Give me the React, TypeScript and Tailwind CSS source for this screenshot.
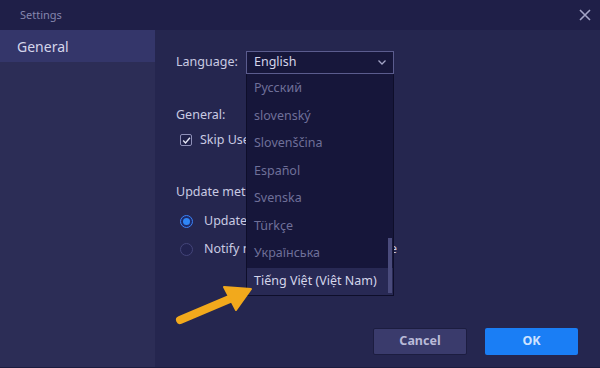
import React from "react";

const langs = [
  "Русский",
  "slovenský",
  "Slovenščina",
  "Español",
  "Svenska",
  "Türkçe",
  "Українська",
  "Tiếng Việt (Việt Nam)",
];

function Arrow() {
  return (
    <svg
      className="absolute left-0 top-0 pointer-events-none"
      width="600"
      height="368"
      viewBox="0 0 600 368"
    >
      <line
        x1="180"
        y1="320"
        x2="232"
        y2="298"
        stroke="#f2a91c"
        strokeWidth="8"
        strokeLinecap="round"
      />
      <polygon points="251,289 224,287 236,310" fill="#f2a91c" stroke="#f2a91c" strokeWidth="2" strokeLinejoin="round" />
    </svg>
  );
}

export default function App() {
  return (
    <div
      className="relative w-[600px] h-[368px] overflow-hidden bg-[#25264f] text-[#c9cae2] flex flex-col"
      style={{ fontFamily: "'Noto Sans', 'Open Sans', sans-serif" }}
    >
      {/* title bar */}
      <div className="h-[30px] bg-[#1f1f48] flex items-center justify-between pl-[20px] pr-[8px] shrink-0">
        <span className="text-[11px] text-[#8586ad]">Settings</span>
        <svg width="14" height="14" viewBox="0 0 14 14">
          <path d="M2 2 L12 12 M12 2 L2 12" stroke="#a3a4c6" strokeWidth="1.6" />
        </svg>
      </div>

      <div className="flex flex-1 border-b border-[#1b1c3f]">
        {/* sidebar */}
        <div className="w-[155px] bg-[#2c2d56] shrink-0">
          <div className="h-[32px] bg-[#34366a] flex items-center pl-[17px] text-[14px] text-[#d4d5ea]">
            General
          </div>
        </div>

        {/* main */}
        <div className="relative flex-1 pl-[21px] pt-[21px] flex flex-col">
          <div className="flex items-center h-[23px]">
            <span className="w-[70px] text-[12.5px]">Language:</span>
            <div className="w-[148px] h-[23px] border border-[#5b5c8e] bg-[#17173b] flex items-center justify-between pl-[7px] pr-[6px]">
              <span className="text-[12.5px] text-[#d4d5ea]">English</span>
              <svg width="10" height="7" viewBox="0 0 10 7">
                <path d="M1.5 1.5 L5 5 L8.5 1.5" stroke="#a3a4c6" strokeWidth="1.3" fill="none" />
              </svg>
            </div>
          </div>

          <div className="mt-[32px] text-[12.5px] h-[18px] leading-[18px]">General:</div>
          <div className="mt-[8px] ml-[4px] flex items-center h-[16px]">
            <span className="w-[12px] h-[12px] rounded-[2px] border border-[#8f90b8] bg-[#20214a] flex items-center justify-center">
              <svg width="9" height="9" viewBox="0 0 9 9">
                <path d="M1.2 4.6 L3.5 6.9 L7.9 1.8" stroke="#e6e7f5" strokeWidth="1.4" fill="none" />
              </svg>
            </span>
            <span className="ml-[8px] text-[12.5px] whitespace-nowrap">Skip User Account Control</span>
          </div>

          <div className="mt-[35px] text-[12.5px] h-[18px] leading-[18px]">Update method:</div>
          <div className="mt-[11px] ml-[4px] flex items-center h-[18px]">
            <span className="w-[13px] h-[13px] rounded-full border border-[#3b82f6] bg-[#1d2a6a] flex items-center justify-center">
              <span className="w-[7px] h-[7px] rounded-full bg-[#2f86f6]" />
            </span>
            <span className="ml-[11px] text-[12.5px] whitespace-nowrap">Update automatically</span>
          </div>
          <div className="mt-[10px] ml-[4px] flex items-center h-[18px]">
            <span className="w-[13px] h-[13px] rounded-full border border-[#44457a] bg-[#222350]" />
            <span className="ml-[11px] text-[12.5px] whitespace-nowrap">Notify me when update available</span>
          </div>

          <div className="mt-auto mb-[12px] mr-[22px] flex justify-end gap-[18px]">
            <button className="w-[94px] h-[27px] rounded-[2px] bg-[#3a3b6c] border border-[#1c1d40] text-[12.5px] font-bold text-[#b9bad8]">
              Cancel
            </button>
            <button className="w-[93px] h-[27px] rounded-[2px] bg-[#1a7ef5] text-[12.5px] font-bold text-[#cfe3ff]">
              OK
            </button>
          </div>

          {/* dropdown list */}
          <div className="absolute left-[91px] top-[44px] w-[148px] h-[222px] pt-[1px] bg-[#16163a] border-x border-b border-[#0e0e2a] flex flex-col">
            {langs.map((l, i) => (
              <div
                key={l}
                className={
                  i === langs.length - 1
                    ? "h-[27.5px] flex items-center pl-[7px] text-[12.5px] bg-[#282954] text-[#d4d5ea] whitespace-nowrap"
                    : "h-[27.5px] flex items-center pl-[7px] text-[12.5px] text-[#6f7099] whitespace-nowrap"
                }
              >
                {l}
              </div>
            ))}
            <div className="absolute right-[1px] top-[164px] w-[4px] h-[55px] bg-[#4a4b7c]" />
          </div>
        </div>
      </div>

      <Arrow />
    </div>
  );
}
